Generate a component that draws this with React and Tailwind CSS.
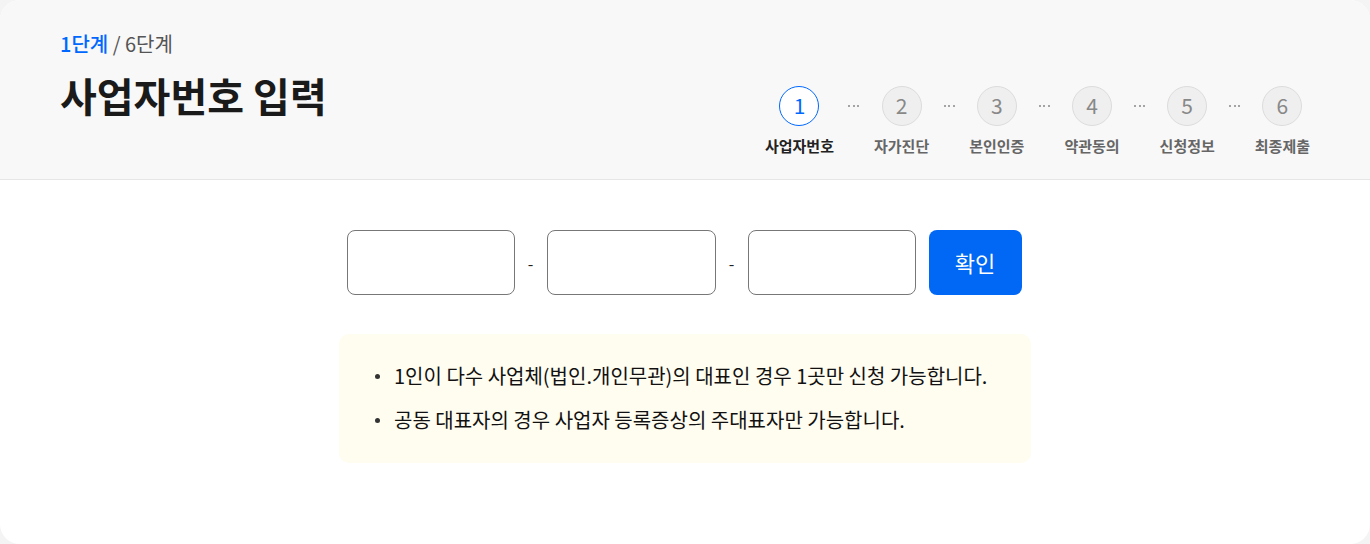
const STEPS = ['사업자번호', '자가진단', '본인인증', '약관동의', '신청정보', '최종제출'];

const NOTICES = [
  '1인이 다수 사업체(법인.개인무관)의 대표인 경우 1곳만 신청 가능합니다.',
  '공동 대표자의 경우 사업자 등록증상의 주대표자만 가능합니다.',
];

function Steps({ current }) {
  return (
    <div className="flex items-start mt-[56px]">
      {STEPS.map((label, i) => (
        <div key={label} className="flex items-start">
          {i > 0 && (
            <div className="w-10 h-10 flex items-center justify-center gap-[2.5px]">
              <span className="w-[2px] h-[2px] rounded-full bg-[#888]" />
              <span className="w-[2px] h-[2px] rounded-full bg-[#888]" />
              <span className="w-[2px] h-[2px] rounded-full bg-[#888]" />
            </div>
          )}
          <div className="flex flex-col items-center">
            <div
              className={`w-10 h-10 rounded-full flex items-center justify-center text-[21px] ${
                i + 1 === current
                  ? 'border border-[#0068ff] bg-white text-[#0068ff]'
                  : 'border border-[#dcdcdc] bg-[#efefef] text-[#888]'
              }`}
            >
              {i + 1}
            </div>
            <span
              className={`mt-[10px] text-[15px] leading-5 font-bold whitespace-nowrap ${
                i + 1 === current ? 'text-[#222]' : 'text-[#666]'
              }`}
            >
              {label}
            </span>
          </div>
        </div>
      ))}
    </div>
  );
}

export default function App() {
  return (
    <div
      className="w-[1370px] h-[544px] bg-[#f4f4f4]"
      style={{ fontFamily: '"Noto Sans CJK KR", "Noto Sans", sans-serif' }}
    >
      <div className="h-full bg-white rounded-[20px] overflow-hidden">
        {/* Header */}
        <div className="bg-[#f8f8f8] border-b border-[#e6e6e6] px-[60px] pt-[30px] pb-[23px] flex justify-between items-start">
          <div>
            <div className="text-[20px] leading-[28px]">
              <span className="text-[#0068ff] font-medium">1단계</span>
              <span className="text-[#555]"> / 6단계</span>
            </div>
            <h1 className="mt-[10px] text-[40px] leading-[54px] font-bold text-[#1a1a1a]">사업자번호 입력</h1>
          </div>
          <Steps current={1} />
        </div>

        {/* Body */}
        <div className="flex flex-col items-center pt-[50px]">
          <div className="flex items-center -translate-x-px">
            <input className="w-[168px] h-[65px] rounded-lg border border-[#777] bg-white outline-none" />
            <span className="w-2 mx-3 text-center text-[16px] text-[#222]">-</span>
            <input className="w-[169px] h-[65px] rounded-lg border border-[#777] bg-white outline-none" />
            <span className="w-2 mx-3 text-center text-[16px] text-[#222]">-</span>
            <input className="w-[168px] h-[65px] rounded-lg border border-[#777] bg-white outline-none" />
            <button className="ml-[13px] w-[93px] h-[65px] rounded-lg bg-[#0068f5] text-white text-[22px]">
              확인
            </button>
          </div>

          <ul className="mt-[39px] w-[692px] rounded-[10px] bg-[#fffcf0] pl-[36px] pr-6 pt-[28px] pb-[29px] flex flex-col gap-4">
            {NOTICES.map((t) => (
              <li key={t} className="flex items-center gap-[14px] text-[20px] leading-[28px] text-[#111]">
                <span className="w-[5px] h-[5px] rounded-full bg-[#333] shrink-0" />
                {t}
              </li>
            ))}
          </ul>
        </div>
      </div>
    </div>
  );
}
